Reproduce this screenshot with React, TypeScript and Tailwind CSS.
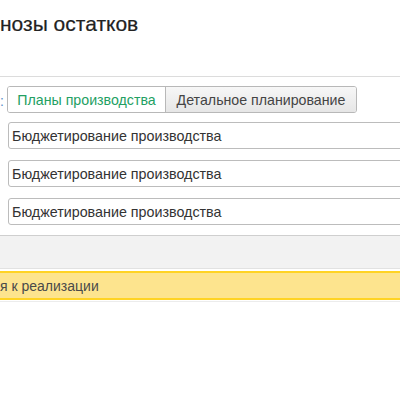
import React from "react";

const sans = "font-['Liberation_Sans',Arial,sans-serif]";

function Field({ value }: { value: string }) {
  return (
    <div className="ml-[8px] w-[400px] h-[27px] flex items-center pl-[3px] pt-[3px] border border-[#bcbcbc] rounded-l-[3px] bg-white text-[14.3px] text-[#333]">
      {value}
    </div>
  );
}

export default function App() {
  return (
    <div className={`w-[400px] h-[400px] overflow-hidden bg-white ${sans}`}>
      <h1 className="mt-[13px] text-[21px] leading-[21px] text-[#222] whitespace-nowrap [-webkit-text-stroke:0.2px_#222]">нозы остатков</h1>

      <div className="mt-[42px] border-t border-[#dcdcdc]" />

      {/* section switcher */}
      <div className="mt-[9px] flex items-center">
        <span className="w-[7px] pt-[2px] text-[14px] text-[#5b8fc9] leading-none">:</span>
        <div className="flex h-[27px] border border-[#b8b8b8] rounded-[3px] text-[14.2px] overflow-hidden">
          <div className="w-[158px] flex items-center justify-center pt-[2px] bg-white text-[#23a063] border-r border-[#b8b8b8]">
            Планы производства
          </div>
          <div className="w-[190px] flex items-center justify-center pt-[2px] bg-gradient-to-b from-[#f7f7f7] to-[#e6e6e6] text-[#444]">
            Детальное планирование
          </div>
        </div>
      </div>

      <div className="mt-[9px] flex flex-col gap-[11px]">
        <Field value="Бюджетирование производства" />
        <Field value="Бюджетирование производства" />
        <Field value="Бюджетирование производства" />
      </div>

      {/* command bar */}
      <div className="mt-[10px] h-[34px] border-t border-[#cfcfcf] bg-[#f2f2f2] border-b border-b-[#e2e2e2]" />

      {/* warning strip */}
      <div className="mt-[2px] h-[29px] flex items-center pt-[2px] bg-[#fde48e] border-y-2 border-[#ffd324] text-[14px] text-[#4a4a4a] whitespace-nowrap">
        я к реализации
      </div>
      <div className="mt-[1px] border-t border-[#ececec]" />
    </div>
  );
}
